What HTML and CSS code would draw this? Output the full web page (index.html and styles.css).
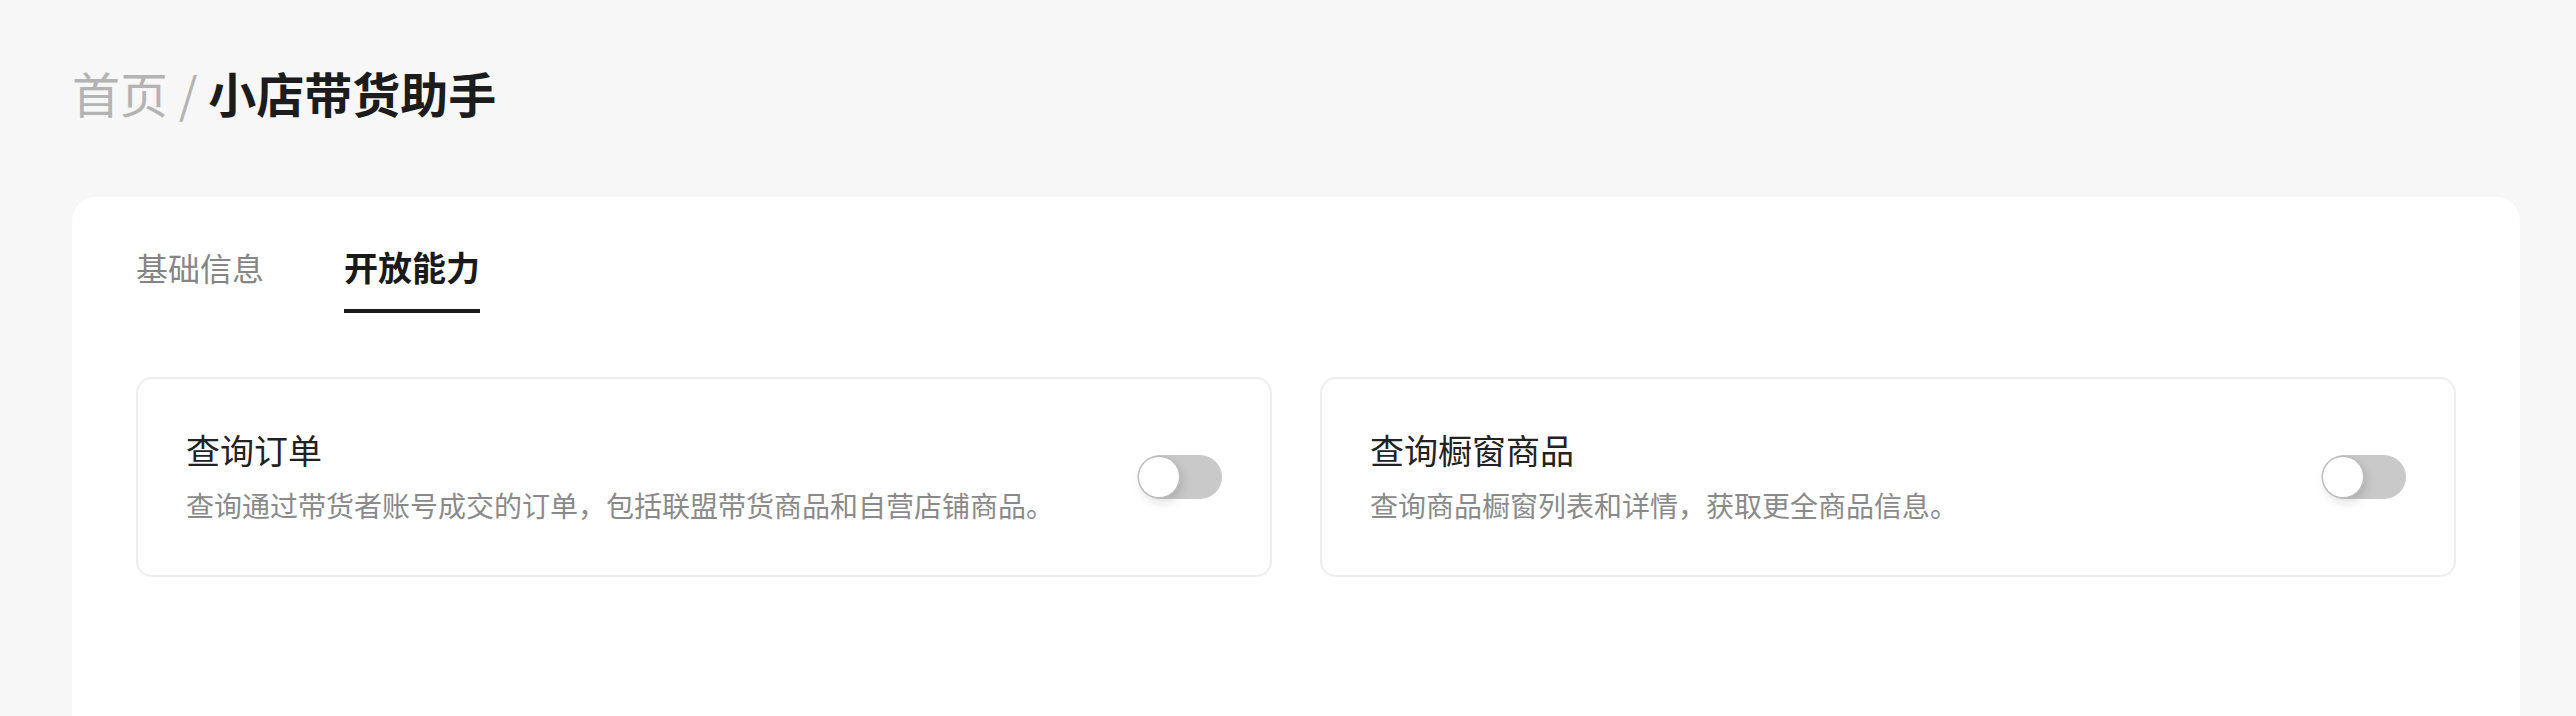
FILE: index.html
```html
<!DOCTYPE html>
<html lang="zh-CN">
<head>
<meta charset="utf-8">
<title>小店带货助手</title>
<link rel="stylesheet" href="styles.css">
</head>
<body>
<div class="page">
  <div class="breadcrumb"><span class="crumb-home">首页 / </span><span class="crumb-current">小店带货助手</span></div>
  <div class="panel">
    <div class="tabs">
      <div class="tab">基础信息</div>
      <div class="tab tab-active">开放能力</div>
    </div>
    <div class="abilities">
      <div class="ability">
        <div class="ability-text">
          <div class="ability-title">查询订单</div>
          <div class="ability-desc">查询通过带货者账号成交的订单，包括联盟带货商品和自营店铺商品。</div>
        </div>
        <div class="switch"><span class="knob"></span></div>
      </div>
      <div class="ability">
        <div class="ability-text">
          <div class="ability-title">查询橱窗商品</div>
          <div class="ability-desc">查询商品橱窗列表和详情，获取更全商品信息。</div>
        </div>
        <div class="switch"><span class="knob"></span></div>
      </div>
    </div>
  </div>
</div>
</body>
</html>
```

FILE: styles.css
```css
html, body {
  margin: 0;
  padding: 0;
  background: #f7f7f7;
}

body {
  font-family: "Noto Sans CJK SC", "Noto Sans", sans-serif;
  overflow: hidden;
}

.page {
  padding: 60px 56px 0 72px;
}

.breadcrumb {
  font-size: 48px;
  line-height: 64px;
  height: 64px;
  margin-bottom: 73px;
  white-space: nowrap;
}

.crumb-home {
  color: #b3b3b3;
}

.crumb-current {
  color: #1c1c1c;
  font-weight: 700;
}

.panel {
  background: #ffffff;
  border-radius: 24px;
  padding: 46px 64px 0 64px;
  min-height: 700px;
}

.tabs {
  display: flex;
  align-items: baseline;
  gap: 80px;
  margin-bottom: 64px;
}

.tab {
  font-size: 32px;
  line-height: 48px;
  color: #858585;
  padding-bottom: 18px;
  border-bottom: 4px solid transparent;
}

.tab-active {
  font-size: 34px;
  font-weight: 700;
  color: #1a1a1a;
  border-bottom-color: #1a1a1a;
}

.abilities {
  display: grid;
  grid-template-columns: 1fr 1fr;
  gap: 48px;
}

.ability {
  display: flex;
  align-items: center;
  justify-content: space-between;
  border: 2px solid #ededed;
  border-radius: 16px;
  padding: 48px;
  height: 100px;
  box-sizing: content-box;
}

.ability-title {
  font-size: 34px;
  line-height: 46px;
  color: #222222;
  margin-bottom: 10px;
}

.ability-desc {
  font-size: 28px;
  line-height: 44px;
  color: #8a8a8a;
}

.switch {
  position: relative;
  flex: 0 0 auto;
  width: 84px;
  height: 44px;
  border-radius: 22px;
  background: #c9c9c9;
}

.knob {
  position: absolute;
  left: 1px;
  top: 2px;
  width: 40px;
  height: 40px;
  border-radius: 50%;
  background: #ffffff;
  box-shadow: 0 0 0 1.5px #bdbdbd, 3px 5px 12px rgba(0, 0, 0, 0.14);
}
```
